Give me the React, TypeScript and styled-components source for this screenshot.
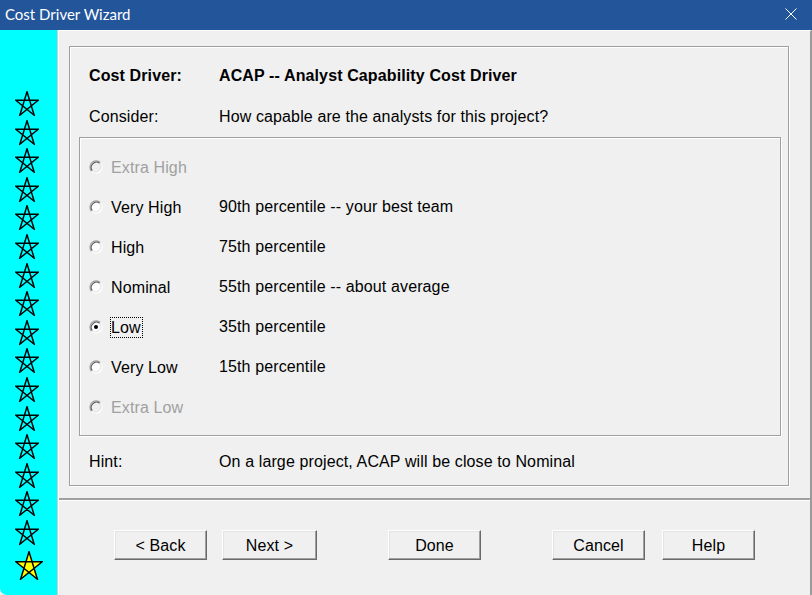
import styled, { createGlobalStyle } from "styled-components";

const GlobalStyle = createGlobalStyle`
  *, *::before, *::after {
    box-sizing: border-box;
  }
  body {
    margin: 0;
    background: #f0f0f0;
    font-family: "Liberation Sans", Arial, sans-serif;
  }
`;

type Level = {
  name: string;
  note: string;
  disabled?: boolean;
  checked?: boolean;
};

const levels: Level[] = [
  { name: "Extra High", note: "", disabled: true },
  { name: "Very High", note: "90th percentile -- your best team" },
  { name: "High", note: "75th percentile" },
  { name: "Nominal", note: "55th percentile -- about average" },
  { name: "Low", note: "35th percentile", checked: true },
  { name: "Very Low", note: "15th percentile" },
  { name: "Extra Low", note: "", disabled: true },
];

function Star({ active }: { active?: boolean }) {
  const w = active ? 28 : 24;
  const h = active ? 29 : 25;
  const cx = w / 2;
  const pts = [
    [cx, 0.8],
    [w - 0.8, h * 0.37],
    [w * 0.8, h - 0.8],
    [w * 0.2, h - 0.8],
    [0.8, h * 0.37],
  ];
  // pentagram: every second point
  const d = [0, 2, 4, 1, 3].map((i) => pts[i].join(",")).join(" ");
  return (
    <StarSvg width={w} height={h} viewBox={`0 0 ${w} ${h}`} active={active}>
      <polygon
        points={d}
        fill={active ? "#ffff00" : "none"}
        fillRule="nonzero"
        stroke="#000"
        strokeWidth={1.45}
        strokeLinejoin="miter"
      />
    </StarSvg>
  );
}

function Radio({ checked, disabled }: { checked?: boolean; disabled?: boolean }) {
  const c = 7;
  const o = 4.45;
  const i = 3.65;
  return (
    <svg width="14" height="14" viewBox="0 0 14 14">
      <circle cx={c} cy={c} r={5.8} fill={disabled ? "#f0f0f0" : "#fff"} />
      <path d={`M${c - o} ${c + o} A6.3 6.3 0 0 1 ${c + o} ${c - o}`} stroke="#a0a0a0" strokeWidth="1.1" fill="none" />
      <path d={`M${c + o} ${c - o} A6.3 6.3 0 0 1 ${c - o} ${c + o}`} stroke="#fff" strokeWidth="1.1" fill="none" />
      <path d={`M${c - i} ${c + i} A5.2 5.2 0 0 1 ${c + i} ${c - i}`} stroke="#5a5a5a" strokeWidth="1.1" fill="none" />
      <path d={`M${c + i} ${c - i} A5.2 5.2 0 0 1 ${c - i} ${c + i}`} stroke="#e3e3e3" strokeWidth="1.1" fill="none" />
      {checked ? <circle cx={c} cy={c} r={2} fill="#000" /> : null}
    </svg>
  );
}

export default function App() {
  return (
    <>
      <GlobalStyle />
      <Window>
        <TitleBar>
          <Title>Cost Driver Wizard</Title>
          <svg width="12" height="12" viewBox="0 0 12 12">
            <path d="M0.5 0.5 L11.5 11.5 M11.5 0.5 L0.5 11.5" stroke="#fff" strokeWidth="1" />
          </svg>
        </TitleBar>
        <Body>
          <StarColumn>
            {Array.from({ length: 16 }).map((_, n) => (
              <Star key={n} />
            ))}
            <Star active />
          </StarColumn>
          <Main>
            <TopSection>
              <Frame>
                <HeaderRow>
                  <Strong>Cost Driver:</Strong>
                  <Strong>ACAP -- Analyst Capability Cost Driver</Strong>
                </HeaderRow>
                <HeaderRow gapAbove={21}>
                  <Text>Consider:</Text>
                  <Text>How capable are the analysts for this project?</Text>
                </HeaderRow>
                <OptionsBox>
                  {levels.map((lv) => (
                    <OptionRow key={lv.name}>
                      <Choice>
                        <Radio checked={lv.checked} disabled={lv.disabled} />
                        <ChoiceLabel disabled={lv.disabled} focused={lv.checked}>
                          {lv.name}
                        </ChoiceLabel>
                      </Choice>
                      <Text>{lv.note}</Text>
                    </OptionRow>
                  ))}
                </OptionsBox>
                <HeaderRow gapAbove={16}>
                  <Text>Hint:</Text>
                  <Text>On a large project, ACAP will be close to Nominal</Text>
                </HeaderRow>
              </Frame>
            </TopSection>
            <Divider />
            <ButtonBar>
              <ButtonGroup gap={15}>
                <Button width={93}>&lt; Back</Button>
                <Button width={95}>Next &gt;</Button>
              </ButtonGroup>
              <Button width={93}>Done</Button>
              <ButtonGroup gap={17}>
                <Button width={93}>Cancel</Button>
                <Button width={93}>Help</Button>
              </ButtonGroup>
            </ButtonBar>
          </Main>
        </Body>
      </Window>
    </>
  );
}

const Window = styled.div`
  width: 812px;
  height: 595px;
  display: flex;
  flex-direction: column;
  background: #f0f0f0;
  overflow: hidden;
  color: #000;
  font-size: 16px;
  letter-spacing: 0.12px;
`;

const TitleBar = styled.div`
  height: 30px;
  flex: none;
  display: flex;
  align-items: center;
  justify-content: space-between;
  padding: 0 15px 2px 5px;
  background: #22559a;
  color: #fff;
`;

const Title = styled.span`
  font-family: Lato, "Noto Sans", sans-serif;
  font-size: 15px;
  letter-spacing: 0;
  line-height: 20px;
`;

const Body = styled.div`
  flex: 1;
  display: flex;
  min-height: 0;
`;

const StarColumn = styled.div`
  width: 58px;
  flex: none;
  display: flex;
  flex-direction: column;
  align-items: flex-start;
  gap: 3.6px;
  padding: 61px 0 0 15px;
  background: #00ffff;
  border-right: 1px solid #d0d0d0;
  border-bottom-left-radius: 7px;
`;

const StarSvg = styled.svg<{ active?: boolean }>`
  display: block;
  flex: none;
  margin-top: ${({ active }) => (active ? "2.4px" : "0")};
`;

const Main = styled.div`
  flex: 1;
  display: flex;
  flex-direction: column;
  border-left: 1px solid #fff;
  border-top: 1px solid #fff;
  border-right: 2px solid #9a9a9a;
`;

const TopSection = styled.div`
  padding: 15px 0 12px 10px;
`;

const Frame = styled.div`
  width: 720px;
  height: 440px;
  display: flex;
  flex-direction: column;
  padding: 19px 0 0 9px;
  border: 1px solid #a0a0a0;
  box-shadow: 1px 1px 0 #fff, inset 1px 1px 0 #fff;
`;

const HeaderRow = styled.div<{ gapAbove?: number }>`
  display: grid;
  grid-template-columns: 130px 1fr;
  align-items: center;
  height: 20px;
  padding-left: 10px;
  margin-top: ${({ gapAbove }) => gapAbove ?? 0}px;
`;

const Text = styled.span`
  line-height: 20px;
  white-space: nowrap;
`;

const Strong = styled(Text)`
  font-weight: bold;
`;

const OptionsBox = styled.div`
  width: 702px;
  height: 299px;
  margin-top: 10px;
  padding: 9px 0 0 9px;
  border: 1px solid #a0a0a0;
  box-shadow: 1px 1px 0 #fff, inset 1px 1px 0 #fff;
`;

const OptionRow = styled.div`
  display: grid;
  grid-template-columns: 130px 1fr;
  align-items: center;
  height: 40px;
`;

const Choice = styled.div`
  display: flex;
  align-items: center;
  gap: 7px;

  svg {
    display: block;
    flex: none;
  }
`;

const ChoiceLabel = styled.span<{ disabled?: boolean; focused?: boolean }>`
  line-height: 19px;
  padding: 0 1px 0 0;
  border: 1px dotted ${({ focused }) => (focused ? "#000" : "transparent")};
  color: ${({ disabled }) => (disabled ? "#a0a0a0" : "#000")};
  white-space: nowrap;
`;

const Divider = styled.div`
  height: 3px;
  flex: none;
  border-top: 2px solid #a0a0a0;
  border-bottom: 1px solid #fff;
`;

const ButtonBar = styled.div`
  display: flex;
  align-items: flex-start;
  gap: 71px;
  padding: 29px 0 0 55px;
`;

const ButtonGroup = styled.div<{ gap: number }>`
  display: flex;
  gap: ${({ gap }) => gap}px;
`;

const Button = styled.button<{ width: number }>`
  width: ${({ width }) => width}px;
  height: 30px;
  padding: 1px 0 0;
  font-family: "Liberation Sans", Arial, sans-serif;
  font-size: 16px;
  letter-spacing: 0.12px;
  color: #000;
  background: #f0f0f0;
  border: 1px solid;
  border-color: #fff #696969 #696969 #fff;
  box-shadow: inset -1px -1px 0 #a0a0a0, inset 1px 1px 0 #e3e3e3;
  border-radius: 0;
  cursor: default;
`;
